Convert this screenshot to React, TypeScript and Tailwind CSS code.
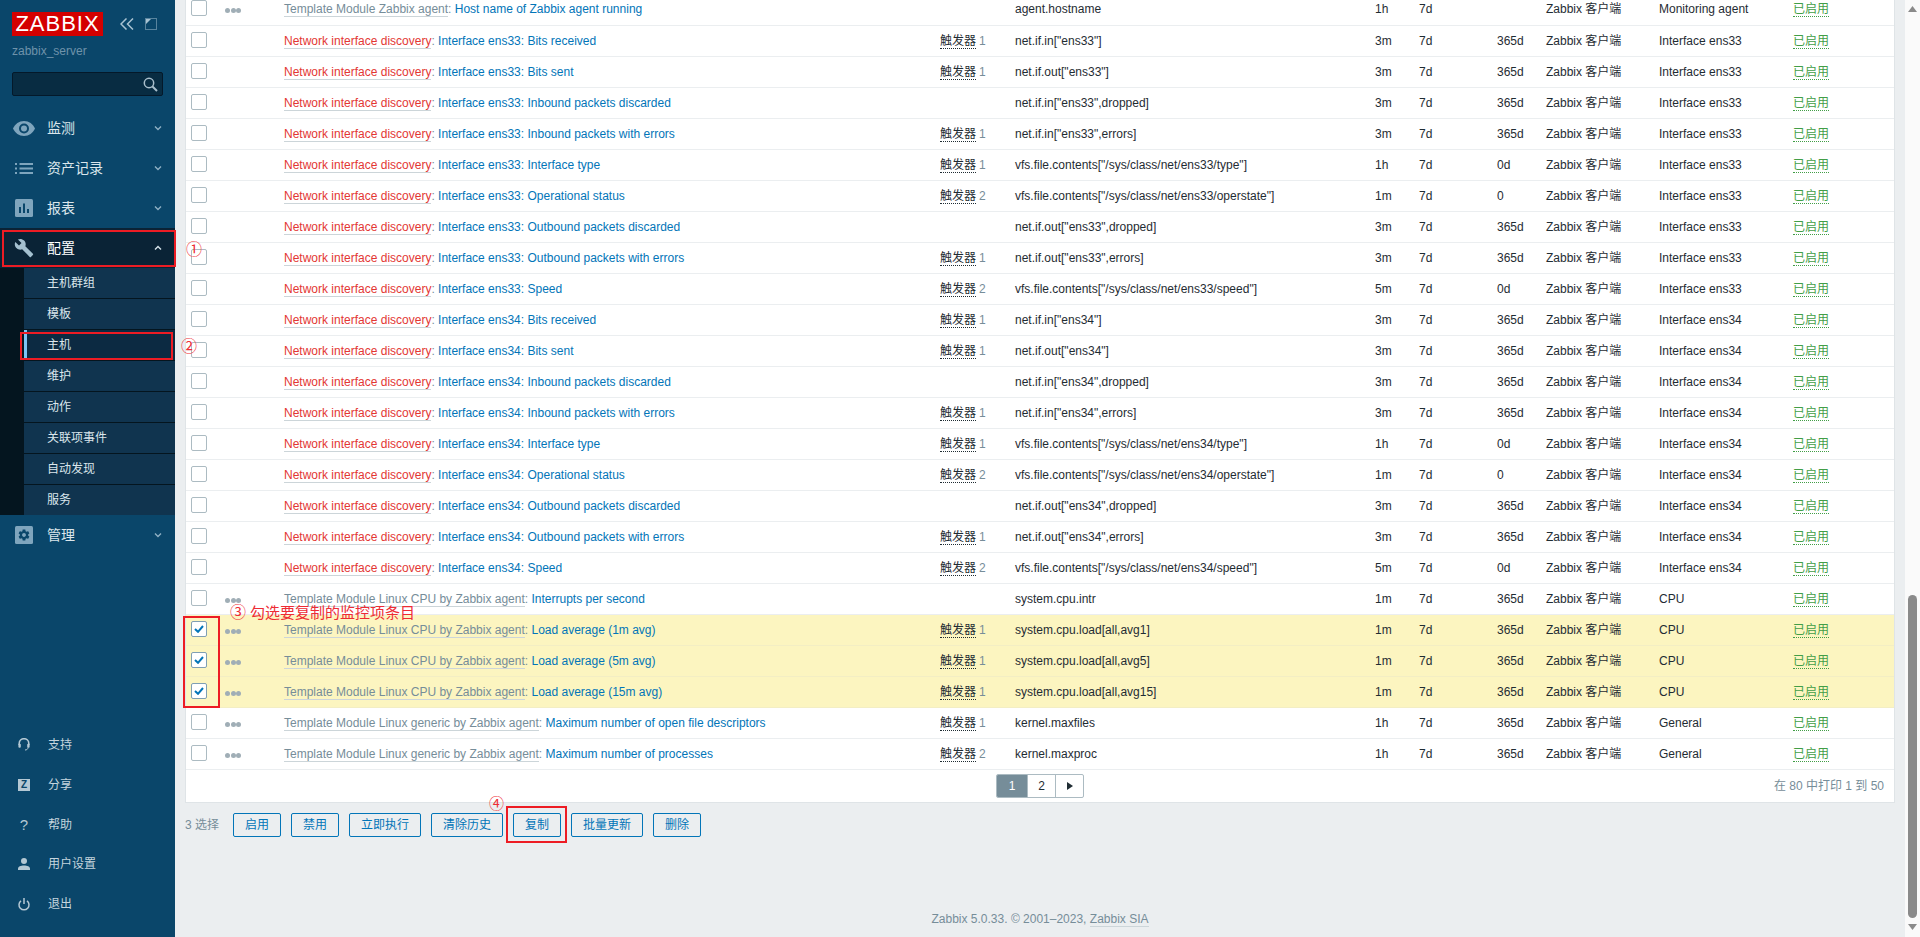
import React from "react";

interface ItemRow {
  prefix: string;
  kind: "template" | "discovery";
  name: string;
  triggers?: number;
  itemKey: string;
  interval: string;
  history: string;
  trends: string;
  app: string;
  selected?: boolean;
}

// Both interfaces have the same discovered items
const interfaceRows = (nic: string): ItemRow[] => {
  const base = {
    prefix: "Network interface discovery",
    kind: "discovery" as const,
    history: "7d",
    app: `Interface ${nic}`,
  };
  return [
    { ...base, name: `Interface ${nic}: Bits received`, triggers: 1, itemKey: `net.if.in["${nic}"]`, interval: "3m", trends: "365d" },
    { ...base, name: `Interface ${nic}: Bits sent`, triggers: 1, itemKey: `net.if.out["${nic}"]`, interval: "3m", trends: "365d" },
    { ...base, name: `Interface ${nic}: Inbound packets discarded`, itemKey: `net.if.in["${nic}",dropped]`, interval: "3m", trends: "365d" },
    { ...base, name: `Interface ${nic}: Inbound packets with errors`, triggers: 1, itemKey: `net.if.in["${nic}",errors]`, interval: "3m", trends: "365d" },
    { ...base, name: `Interface ${nic}: Interface type`, triggers: 1, itemKey: `vfs.file.contents["/sys/class/net/${nic}/type"]`, interval: "1h", trends: "0d" },
    { ...base, name: `Interface ${nic}: Operational status`, triggers: 2, itemKey: `vfs.file.contents["/sys/class/net/${nic}/operstate"]`, interval: "1m", trends: "0" },
    { ...base, name: `Interface ${nic}: Outbound packets discarded`, itemKey: `net.if.out["${nic}",dropped]`, interval: "3m", trends: "365d" },
    { ...base, name: `Interface ${nic}: Outbound packets with errors`, triggers: 1, itemKey: `net.if.out["${nic}",errors]`, interval: "3m", trends: "365d" },
    { ...base, name: `Interface ${nic}: Speed`, triggers: 2, itemKey: `vfs.file.contents["/sys/class/net/${nic}/speed"]`, interval: "5m", trends: "0d" },
  ];
};

const cpu = "Template Module Linux CPU by Zabbix agent";
const generic = "Template Module Linux generic by Zabbix agent";

const rows: ItemRow[] = [
  { prefix: "Template Module Zabbix agent", kind: "template", name: "Host name of Zabbix agent running", itemKey: "agent.hostname", interval: "1h", history: "7d", trends: "", app: "Monitoring agent" },
  ...interfaceRows("ens33"),
  ...interfaceRows("ens34"),
  { prefix: cpu, kind: "template", name: "Interrupts per second", itemKey: "system.cpu.intr", interval: "1m", history: "7d", trends: "365d", app: "CPU" },
  { prefix: cpu, kind: "template", name: "Load average (1m avg)", triggers: 1, itemKey: "system.cpu.load[all,avg1]", interval: "1m", history: "7d", trends: "365d", app: "CPU", selected: true },
  { prefix: cpu, kind: "template", name: "Load average (5m avg)", triggers: 1, itemKey: "system.cpu.load[all,avg5]", interval: "1m", history: "7d", trends: "365d", app: "CPU", selected: true },
  { prefix: cpu, kind: "template", name: "Load average (15m avg)", triggers: 1, itemKey: "system.cpu.load[all,avg15]", interval: "1m", history: "7d", trends: "365d", app: "CPU", selected: true },
  { prefix: generic, kind: "template", name: "Maximum number of open file descriptors", triggers: 1, itemKey: "kernel.maxfiles", interval: "1h", history: "7d", trends: "365d", app: "General" },
  { prefix: generic, kind: "template", name: "Maximum number of processes", triggers: 2, itemKey: "kernel.maxproc", interval: "1h", history: "7d", trends: "365d", app: "General" },
];

const colWidths = [34, 59, 656, 75, 360, 44, 78, 49, 113, 134, 106];

const Chevron: React.FC<{ up?: boolean; light?: boolean }> = ({ up, light }) => (
  <svg width="8" height="6" viewBox="0 0 8 6" fill="none" stroke={light ? "#d5e2ea" : "#8fb0c4"} strokeWidth="1.4">
    <path d={up ? "M1 4.5 4 1.5l3 3" : "M1 1.5l3 3 3-3"} />
  </svg>
);

const EyeIcon = () => (
  <svg width="22" height="15" viewBox="0 0 22 15">
    <path d="M11 0C6 0 2 3 0 7.5 2 12 6 15 11 15s9-3 11-7.5C20 3 16 0 11 0z" fill="#7fa5bd" />
    <circle cx="11" cy="7.5" r="5" fill="#0a466a" />
    <circle cx="11" cy="7.5" r="3" fill="#7fa5bd" />
  </svg>
);

const ListIcon = () => (
  <svg width="18" height="11" viewBox="0 0 18 11" fill="#7fa5bd">
    <rect x="0" y="0" width="2" height="2" />
    <rect x="0" y="4.5" width="2" height="2" />
    <rect x="0" y="9" width="2" height="2" />
    <rect x="4.5" y="0" width="13.5" height="2" />
    <rect x="4.5" y="4.5" width="13.5" height="2" />
    <rect x="4.5" y="9" width="13.5" height="2" />
  </svg>
);

const ChartIcon = () => (
  <svg width="18" height="18" viewBox="0 0 18 18">
    <rect width="18" height="18" rx="1.5" fill="#7fa5bd" />
    <rect x="4" y="8" width="2" height="6" fill="#0a466a" />
    <rect x="8" y="4.5" width="2" height="9.5" fill="#0a466a" />
    <rect x="12" y="10" width="2" height="4" fill="#0a466a" />
  </svg>
);

const WrenchIcon = () => (
  <svg width="20" height="20" viewBox="0 0 24 24" fill="#a4c0d0">
    <path d="M22.7 19l-9.1-9.1c.9-2.3.4-5-1.5-6.9-2-2-5-2.4-7.4-1.3L9 6 6 9 1.6 4.7C.4 7.1.9 10.1 2.9 12.1c1.9 1.9 4.6 2.4 6.9 1.5l9.1 9.1c.4.4 1 .4 1.4 0l2.3-2.3c.5-.4.5-1.1.1-1.4z" />
  </svg>
);

const GearIcon = () => (
  <svg width="18" height="18" viewBox="0 0 18 18">
    <rect width="18" height="18" rx="1.5" fill="#7fa5bd" />
    <g transform="translate(2.4 2.4) scale(0.55)">
      <path
        fill="#0a466a"
        d="M19.43 12.98c.04-.32.07-.64.07-.98s-.03-.66-.07-.98l2.11-1.65c.19-.15.24-.42.12-.64l-2-3.46c-.12-.22-.39-.3-.61-.22l-2.49 1c-.52-.4-1.08-.73-1.69-.98l-.38-2.65C14.46 2.18 14.25 2 14 2h-4c-.25 0-.46.18-.49.42l-.38 2.65c-.61.25-1.17.59-1.69.98l-2.49-1c-.23-.09-.49 0-.61.22l-2 3.46c-.13.22-.07.49.12.64l2.11 1.65c-.04.32-.07.65-.07.98s.03.66.07.98l-2.11 1.65c-.19.15-.24.42-.12.64l2 3.46c.12.22.39.3.61.22l2.49-1c.52.4 1.08.73 1.69.98l.38 2.65c.03.24.24.42.49.42h4c.25 0 .46-.18.49-.42l.38-2.65c.61-.25 1.17-.59 1.69-.98l2.49 1c.23.09.49 0 .61-.22l2-3.46c.12-.22.07-.49-.12-.64l-2.11-1.65zM12 15.5c-1.93 0-3.5-1.57-3.5-3.5s1.57-3.5 3.5-3.5 3.5 1.57 3.5 3.5-1.57 3.5-3.5 3.5z"
      />
    </g>
  </svg>
);

const HeadsetIcon = () => (
  <svg width="12" height="13" viewBox="0 0 12 13" fill="none">
    <path d="M1.2 7V5.5a4.8 4.8 0 0 1 9.6 0V7" stroke="#b4c8d4" strokeWidth="1.6" />
    <rect x="0.4" y="5.8" width="2.4" height="4" rx="1" fill="#b4c8d4" />
    <rect x="9.2" y="5.8" width="2.4" height="4" rx="1" fill="#b4c8d4" />
    <path d="M10 9.5c0 1.6-1.2 2.5-3 2.5" stroke="#b4c8d4" strokeWidth="1" />
  </svg>
);

const PersonIcon = () => (
  <svg width="12" height="12" viewBox="0 0 12 12" fill="#b4c8d4">
    <circle cx="6" cy="3" r="3" />
    <path d="M0 12v-1.5C0 8.6 2.7 7.4 6 7.4s6 1.2 6 3.1V12z" />
  </svg>
);

const PowerIcon = () => (
  <svg width="12" height="13" viewBox="0 0 12 13" fill="none" stroke="#b4c8d4" strokeWidth="1.5">
    <path d="M6 0v6" />
    <path d="M3 2.8a5 5 0 1 0 6 0" />
  </svg>
);

const ZIcon = () => (
  <span className="flex h-[12px] w-[12px] items-center justify-center bg-[#b4c8d4] text-[10px] leading-none font-bold text-[#0a466a]">Z</span>
);

const navTop = [
  { label: "监测", icon: <EyeIcon /> },
  { label: "资产记录", icon: <ListIcon /> },
  { label: "报表", icon: <ChartIcon /> },
];

const subItems = ["主机群组", "模板", "主机", "维护", "动作", "关联项事件", "自动发现", "服务"];

const bottomItems = [
  { label: "支持", icon: <HeadsetIcon /> },
  { label: "分享", icon: <ZIcon /> },
  { label: "帮助", icon: <span className="text-[15px] leading-none text-[#b4c8d4]">?</span> },
  { label: "用户设置", icon: <PersonIcon /> },
  { label: "退出", icon: <PowerIcon /> },
];

const NavItem: React.FC<{ label: string; icon: React.ReactNode; active?: boolean }> = ({ label, icon, active }) => (
  <div className={`flex h-[40px] items-center ${active ? "bg-[#0a2336] text-white" : "text-[#dbe6ec]"}`}>
    <span className="flex w-[47px] shrink-0 items-center justify-center">{icon}</span>
    <span className="flex-1 text-[14px]">{label}</span>
    <span className="mr-[13px] flex w-[8px]">
      <Chevron up={active} light={active} />
    </span>
  </div>
);

const Sidebar = () => (
  <aside className="flex h-[937px] w-[175px] shrink-0 flex-col bg-[#0a466a]">
    <div className="flex items-center pt-[12px] pl-[12px]">
      <span className="flex h-[24px] w-[91px] items-center justify-center bg-[#d40000] text-[22px] leading-none tracking-[1px] text-white">ZABBIX</span>
      <svg className="ml-[17px]" width="14" height="12" viewBox="0 0 14 12" fill="none" stroke="#a9c3d2" strokeWidth="1.5">
        <path d="M6.5 0.5 1 6l5.5 5.5M13 0.5 7.500 6l5.500 5.500" />
      </svg>
      <svg className="ml-[11px]" width="12" height="12" viewBox="0 0 12 12" fill="none">
        <rect x="0.5" y="0.5" width="11" height="11" stroke="#a9c3d2" strokeDasharray="1 1" />
        <path d="M1 1h5L1 6z" fill="#a9c3d2" />
      </svg>
    </div>
    <div className="mt-[8px] pl-[12px] text-[12px] leading-[14px] text-[#6f93aa]">zabbix_server</div>
    <div className="mx-[12px] mt-[14px] flex h-[24px] items-center justify-end rounded-[2px] border border-[#04192a] bg-[#082c42] pr-[4px]">
      <svg width="15" height="15" viewBox="0 0 15 15" fill="none" stroke="#a9bfcc" strokeWidth="1.5">
        <circle cx="6" cy="6" r="4.700" />
        <path d="M9.500 9.500 14 14" strokeWidth="2" />
      </svg>
    </div>
    <nav className="mt-[12px]">
      {navTop.map((item) => (
        <NavItem key={item.label} label={item.label} icon={item.icon} />
      ))}
      <NavItem label="配置" icon={<WrenchIcon />} active />
      <div className="bg-[#04151f] pl-[24px]">
        {subItems.map((label, i) => (
          <div
            key={label}
            className={`relative flex items-center pl-[23px] text-[12px] text-[#dbe6ec] ${
              i === subItems.length - 1 ? "h-[30px]" : "h-[31px] border-b border-[#04151f]"
            } ${label === "主机" ? "bg-[#0c2a42]" : "bg-[#10344f]"}`}
          >
            {label === "主机" && <span className="absolute top-0 bottom-0 left-0 w-[3px] bg-[#7cc4f5]" />}
            {label}
          </div>
        ))}
      </div>
      <NavItem label="管理" icon={<GearIcon />} />
    </nav>
    <div className="mt-auto mb-[13px]">
      {bottomItems.map((item) => (
        <div key={item.label} className="flex h-[39.800px] items-center text-[12px] text-[#c5d5de]">
          <span className="flex w-[48px] shrink-0 items-center justify-center">{item.icon}</span>
          {item.label}
        </div>
      ))}
    </div>
  </aside>
);

const Checkbox: React.FC<{ checked?: boolean }> = ({ checked }) => (
  <span className={`mb-[2px] flex h-[16px] w-[16px] items-center justify-center rounded-[2px] border bg-white ${checked ? "border-[#7f9fb3]" : "border-[#acbbc2]"}`}>
    {checked && (
      <svg width="10" height="8" viewBox="0 0 10 8" fill="none" stroke="#0275b8" strokeWidth="2">
        <path d="M1 4l3 2.800L9 1" />
      </svg>
    )}
  </span>
);

const Dots = () => (
  <span className="mt-[3px] flex w-[16px] justify-between">
    <span className="h-[5px] w-[5px] rounded-full bg-[#a0aeb6]" />
    <span className="h-[5px] w-[5px] rounded-full bg-[#a0aeb6]" />
    <span className="h-[5px] w-[5px] rounded-full bg-[#a0aeb6]" />
  </span>
);

const TableRow: React.FC<{ row: ItemRow }> = ({ row }) => (
  <tr className={`h-[31px] border-b ${row.selected ? "border-[#f3eec4] bg-[#fcf5c0]" : "border-[#ebeef0] bg-white"}`}>
    <td className="pl-[5px]">
      <Checkbox checked={row.selected} />
    </td>
    <td className="pl-[5px]">{row.kind === "template" && <Dots />}</td>
    <td className="pl-[5px]">
      <span className={`border-b border-[#ccd5d9] ${row.kind === "discovery" ? "text-[#e33734]" : "text-[#768d99]"}`}>{row.prefix}</span>
      <span className="text-[#768d99]">: </span>
      <span className="text-[#0275b8]">{row.name}</span>
    </td>
    <td className="pl-[5px]">
      {row.triggers && (
        <>
          <span className="border-b border-dotted border-[#1f2c33]">触发器</span>
          <span className="ml-[3px] text-[#768d99]">{row.triggers}</span>
        </>
      )}
    </td>
    <td className="pl-[5px]">{row.itemKey}</td>
    <td className="pl-[5px]">{row.interval}</td>
    <td className="pl-[5px]">{row.history}</td>
    <td className="pl-[5px]">{row.trends}</td>
    <td className="pl-[5px]">Zabbix 客户端</td>
    <td className="pl-[5px]">{row.app}</td>
    <td className="pl-[5px]">
      <span className="border-b border-dotted border-[#429e47] text-[#429e47]">已启用</span>
    </td>
  </tr>
);

const actions = [
  { label: "启用", width: "w-[48px]" },
  { label: "禁用", width: "w-[48px]" },
  { label: "立即执行", width: "w-[72px]" },
  { label: "清除历史", width: "w-[72px]" },
  { label: "复制", width: "w-[48px]" },
  { label: "批量更新", width: "w-[72px]" },
  { label: "删除", width: "w-[48px]" },
];

const ScrollBar = () => (
  <div className="flex h-[937px] w-[15px] shrink-0 flex-col items-center bg-[#fafafa]">
    <svg className="mt-[6px]" width="9" height="6" viewBox="0 0 9 6" fill="#8a8a8a">
      <path d="M4.500 0 9 6H0z" />
    </svg>
    <div className="mt-[583px] h-[323px] w-[9px] rounded-[5px] bg-[#8a8a8a]" />
    <svg className="mt-[6px]" width="9" height="6" viewBox="0 0 9 6" fill="#8a8a8a">
      <path d="M0 0h9L4.500 6z" />
    </svg>
  </div>
);

// Red marks drawn by hand over the screenshot
const Annotations = () => (
  <div className="pointer-events-none absolute inset-0 text-[#ee2c34]">
    <div className="absolute top-[230px] left-[2px] h-[37px] w-[174px] border-2 border-[#ed1c24]" />
    <div className="absolute top-[332px] left-[20px] h-[28px] w-[153px] border-2 border-[#ed1c24]" />
    <div className="absolute top-[616px] left-[183px] h-[92px] w-[37px] border-2 border-[#ed1c24]" />
    <div className="absolute top-[806px] left-[506px] h-[37px] w-[61px] border-2 border-[#ed1c24]" />
    <span className="absolute top-[240px] left-[186px] text-[16px] leading-[20px]">①</span>
    <span className="absolute top-[337px] left-[181px] text-[16px] leading-[20px]">②</span>
    <span className="absolute top-[603px] left-[230px] text-[16px] leading-[20px]">③</span>
    <span className="absolute top-[603px] left-[250px] text-[15px] leading-[20px]">勾选要复制的监控项条目</span>
    <span className="absolute top-[794px] left-[489px] text-[15px] leading-[20px]">④</span>
  </div>
);

export default function App() {
  return (
    <div className="relative flex h-[937px] w-[1920px] overflow-hidden bg-[#ebeef0] text-[12px] text-[#1f2c33] [font-family:'Liberation_Sans','Noto_Sans_CJK_SC',sans-serif]">
      <Sidebar />
      <main className="min-w-0 flex-1 pl-[10px] pr-[10px]">
        <div className="-mt-[6px] border-x border-b border-[#dfe4e7] bg-white">
          <table className="w-[1708px] table-fixed border-collapse">
            <colgroup>
              {colWidths.map((w, i) => (
                <col key={i} style={{ width: w }} />
              ))}
            </colgroup>
            <tbody>
              {rows.map((row) => (
                <TableRow key={row.itemKey} row={row} />
              ))}
            </tbody>
          </table>
          <div className="grid h-[32px] grid-cols-[1fr_auto_1fr] items-center pt-[1px]">
            <span />
            <div className="flex h-[24px] overflow-hidden rounded-[2px] border border-[#acbbc2]">
              <span className="flex w-[30px] items-center justify-center bg-[#768d99] text-white">1</span>
              <span className="flex w-[29px] items-center justify-center border-x border-[#acbbc2]">2</span>
              <span className="flex w-[27px] items-center justify-center">
                <svg width="6" height="8" viewBox="0 0 6 8" fill="#1f2c33">
                  <path d="M0 0l6 4-6 4z" />
                </svg>
              </span>
            </div>
            <span className="pr-[10px] text-right text-[#768d99]">在 80 中打印 1 到 50</span>
          </div>
        </div>
        <div className="mt-[10px] flex items-center">
          <span className="mr-[14px] text-[#768d99]">3 选择</span>
          <div className="flex gap-[10px]">
            {actions.map((a) => (
              <button key={a.label} className={`h-[24px] rounded-[2px] border border-[#0275b8] text-[12px] text-[#0275b8] ${a.width}`}>
                {a.label}
              </button>
            ))}
          </div>
        </div>
        <div className="mt-[73px] text-center text-[#768d99]">
          Zabbix 5.0.33. © 2001–2023, <span className="border-b border-[#ccd5d9]">Zabbix SIA</span>
        </div>
      </main>
      <ScrollBar />
      <Annotations />
    </div>
  );
}
